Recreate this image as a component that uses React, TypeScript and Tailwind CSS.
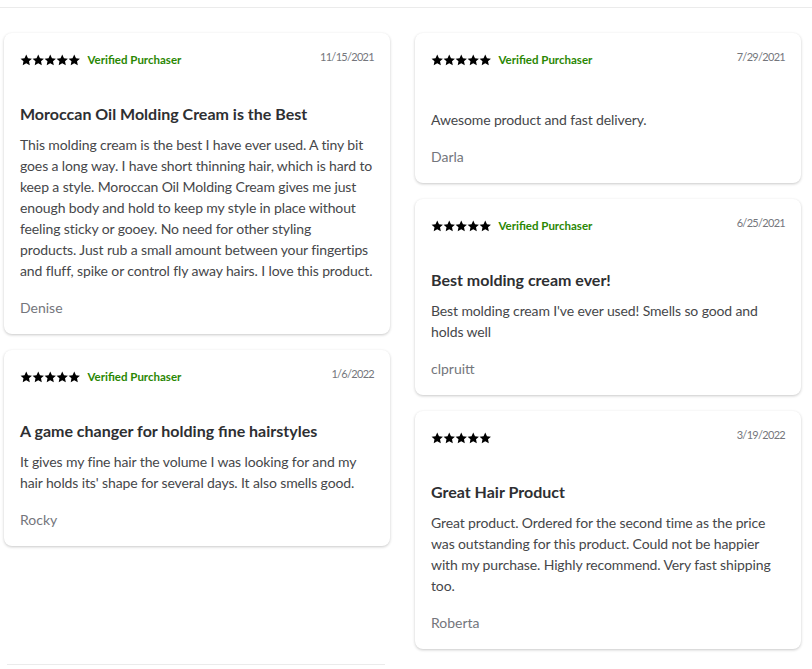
import React from 'react';

type Review = {
  date: string;
  verified: boolean;
  title?: string;
  body: React.ReactNode;
  author: string;
};

const leftReviews: Review[] = [
  {
    date: '11/15/2021',
    verified: true,
    title: 'Moroccan Oil Molding Cream is the Best',
    body: (
      <>
        This molding cream is the best I have ever used. A tiny bit goes a long way. I have short thinning hair, which is hard to keep a style. Moroccan Oil Molding Cream gives me just enough body and hold to keep my style in place without feeling sticky or gooey. No need for other styling<br />products. Just rub a small amount between your fingertips<br />and fluff, spike or control fly away hairs. I love this product.
      </>
    ),
    author: 'Denise',
  },
  {
    date: '1/6/2022',
    verified: true,
    title: 'A game changer for holding fine hairstyles',
    body: "It gives my fine hair the volume I was looking for and my hair holds its' shape for several days. It also smells good.",
    author: 'Rocky',
  },
];

const rightReviews: Review[] = [
  { date: '7/29/2021', verified: true, body: 'Awesome product and fast delivery.', author: 'Darla' },
  {
    date: '6/25/2021',
    verified: true,
    title: 'Best molding cream ever!',
    body: "Best molding cream I've ever used! Smells so good and holds well",
    author: 'clpruitt',
  },
  {
    date: '3/19/2022',
    verified: false,
    title: 'Great Hair Product',
    body: 'Great product. Ordered for the second time as the price was outstanding for this product. Could not be happier with my purchase. Highly recommend. Very fast shipping too.',
    author: 'Roberta',
  },
];

function Star() {
  return (
    <svg viewBox="0 0 24 24" className="w-[12.5px] h-[12.5px]" fill="#000">
      <path d="M12 1l3.3 7 7.6.9-5.6 5.2 1.5 7.6L12 17.9l-6.8 3.8 1.5-7.6L1.1 8.9l7.6-.9z" />
    </svg>
  );
}

function ReviewCard({ r }: { r: Review }) {
  return (
    <div className="bg-white rounded-lg shadow-[0_1px_3px_rgba(0,0,0,0.22)] px-4 pt-[17px] pb-4">
      <div className="flex items-start justify-between h-5">
        <div className="flex items-center h-5">
          <div className="flex -space-x-[0.5px]">
            <Star /><Star /><Star /><Star /><Star />
          </div>
          <span className={`ml-[7px] text-[11.5px] font-bold text-[#2a8703] ${r.verified ? '' : 'invisible'}`}>Verified Purchaser</span>
        </div>
        <span className="text-[11px] tracking-[-0.7px] text-[#74767c] leading-4 -mt-[1px]">{r.date}</span>
      </div>
      {r.title ? (
        <h3 className="mt-[32px] text-[16px] leading-6 font-bold text-[#2e2f32]">{r.title}</h3>
      ) : null}
      <p className={`${r.title ? 'mt-[8px]' : 'mt-[39px]'} text-[14px] leading-[21px] tracking-[-0.12px] text-[#46474a]`}>{r.body}</p>
      <p className="mt-4 text-[14px] leading-[21px] text-[#74767c]">{r.author}</p>
    </div>
  );
}

export default function App() {
  return (
    <div className="bg-white min-h-[669px] pt-[7px]" style={{ fontFamily: "Lato, 'Liberation Sans', sans-serif" }}>
      <div className="border-t border-[#ebebeb]" />
      <div className="flex gap-[25px] pl-1 pr-[11px] pt-[25px]">
        <div className="flex-1 flex flex-col gap-4">
          {leftReviews.map((r, i) => <ReviewCard key={i} r={r} />)}
        </div>
        <div className="flex-1 flex flex-col gap-4">
          {rightReviews.map((r, i) => <ReviewCard key={i} r={r} />)}
        </div>
      </div>
      <div className="flex pl-[7px] pt-[15px]">
        <div className="w-[378px] border-t border-[#ebebeb] h-6" />
      </div>
    </div>
  );
}
